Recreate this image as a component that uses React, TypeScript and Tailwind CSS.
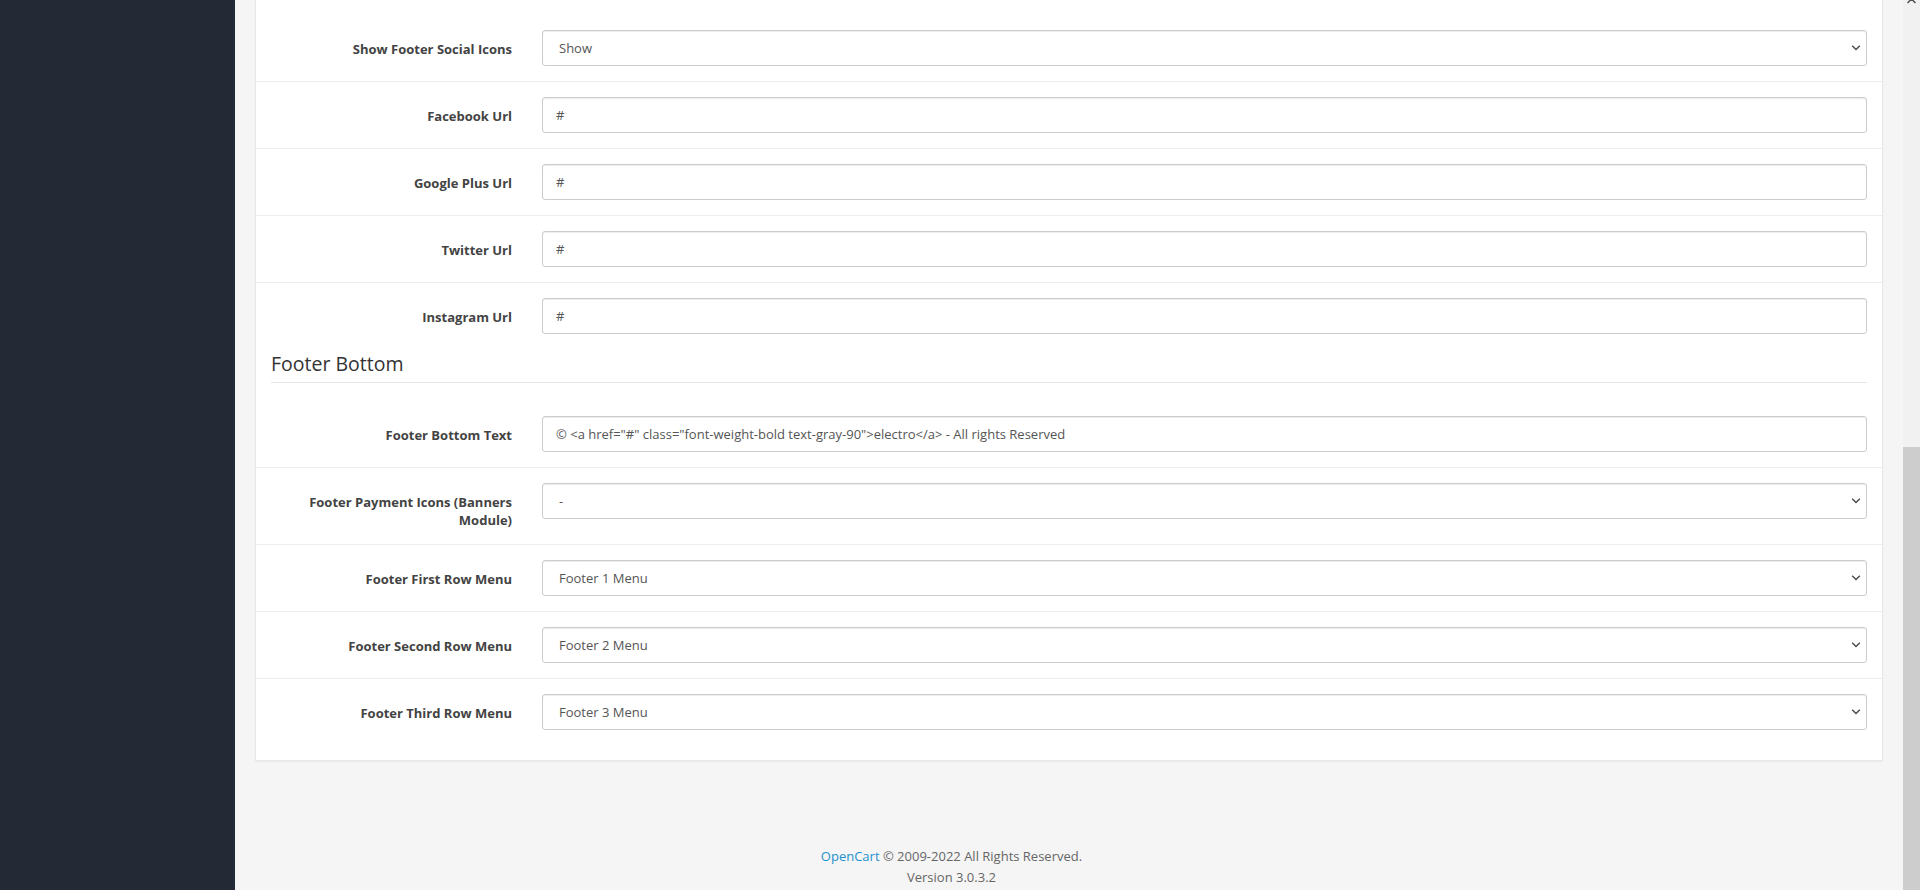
import React from "react";

type Row = {
  label: string;
  value: string;
  kind: "select" | "input";
  first?: boolean;
};

const topRows: Row[] = [
  { label: "Show Footer Social Icons", value: "Show", kind: "select", first: true },
  { label: "Facebook Url", value: "#", kind: "input" },
  { label: "Google Plus Url", value: "#", kind: "input" },
  { label: "Twitter Url", value: "#", kind: "input" },
  { label: "Instagram Url", value: "#", kind: "input" },
];

const bottomRows: Row[] = [
  {
    label: "Footer Bottom Text",
    value: '© <a href="#" class="font-weight-bold text-gray-90">electro</a> - All rights Reserved',
    kind: "input",
    first: true,
  },
  { label: "Footer Payment Icons (Banners Module)", value: "-", kind: "select" },
  { label: "Footer First Row Menu", value: "Footer 1 Menu", kind: "select" },
  { label: "Footer Second Row Menu", value: "Footer 2 Menu", kind: "select" },
  { label: "Footer Third Row Menu", value: "Footer 3 Menu", kind: "select" },
];

function Chevron() {
  return (
    <svg width="10" height="7" viewBox="0 0 10 7" className="pointer-events-none absolute right-[6px] top-1/2 -translate-y-1/2">
      <path d="M1.2 1.3 L5 5.1 L8.8 1.3" fill="none" stroke="#4a4a4a" strokeWidth="1.4" />
    </svg>
  );
}

function FormRow({ row, padTop }: { row: Row; padTop?: string }) {
  return (
    <div
      className={
        "flex " +
        (row.first ? "" : "border-t border-[#ededed] ") +
        (padTop ? padTop : "pt-[15px]") +
        " pb-[15px]"
      }
    >
      <label className="w-[271px] shrink-0 pl-[15px] pr-[15px] pt-[10px] text-right text-[13px] leading-[18px] font-bold text-[#434343]">
        {row.label}
      </label>
      <div className="flex-1 px-[15px]">
        {row.kind === "select" ? (
          <div className="relative">
            <div className="h-[36px] w-full rounded-[3px] border border-[#cccccc] bg-white pl-[16px] text-[13px] leading-[34px] text-[#555555] shadow-[inset_0_1px_1px_rgba(0,0,0,0.075)]">
              {row.value}
            </div>
            <Chevron />
          </div>
        ) : (
          <div className="h-[36px] w-full rounded-[3px] border border-[#cccccc] bg-white pl-[13px] text-[13px] leading-[34px] text-[#555555] shadow-[inset_0_1px_1px_rgba(0,0,0,0.075)] whitespace-nowrap overflow-hidden">
            {row.value}
          </div>
        )}
      </div>
    </div>
  );
}

export default function App() {
  return (
    <div className="flex h-[890px] w-full overflow-hidden bg-[#f5f5f5] font-['Open_Sans','Noto_Sans',sans-serif]">
      <aside className="w-[235px] shrink-0 bg-[#242a35]" />
      <div className="flex min-w-0 flex-1 flex-col">
        <div className="px-[20px]">
          <div className="border-x border-b border-[#e8e8e8] bg-white pb-[15px] shadow-[0_1px_2px_rgba(0,0,0,0.04)]">
            {topRows.map((r, i) => (
              <FormRow key={r.label} row={r} padTop={i === 0 ? "pt-[30px]" : undefined} />
            ))}
            <div className="mx-[15px] mb-[18px] border-b border-[#e5e5e5] pt-[2px] pb-[5px] text-[19.5px] leading-[26px] text-[#333333]">
              Footer Bottom
            </div>
            {bottomRows.map((r) => (
              <FormRow key={r.label} row={r} />
            ))}
          </div>
        </div>
        <footer className="mt-[85px] pr-[235px] text-center text-[13px] leading-[21px] text-[#666666]">
          <div>
            <a href="#" className="text-[#1e91cf]">OpenCart</a> © 2009-2022 All Rights Reserved.
          </div>
          <div>Version 3.0.3.2</div>
        </footer>
      </div>
      <div className="flex w-[17px] shrink-0 flex-col bg-[#f1f1f1]">
        <div className="flex h-[447px] justify-center">
          <svg width="9" height="6" viewBox="0 0 9 6" className="-mt-[2px]">
            <path d="M0.5 5 L4.5 1 L8.5 5" fill="none" stroke="#505050" strokeWidth="1.5" />
          </svg>
        </div>
        <div className="flex-1 bg-[#cdcdcd]" />
      </div>
    </div>
  );
}
